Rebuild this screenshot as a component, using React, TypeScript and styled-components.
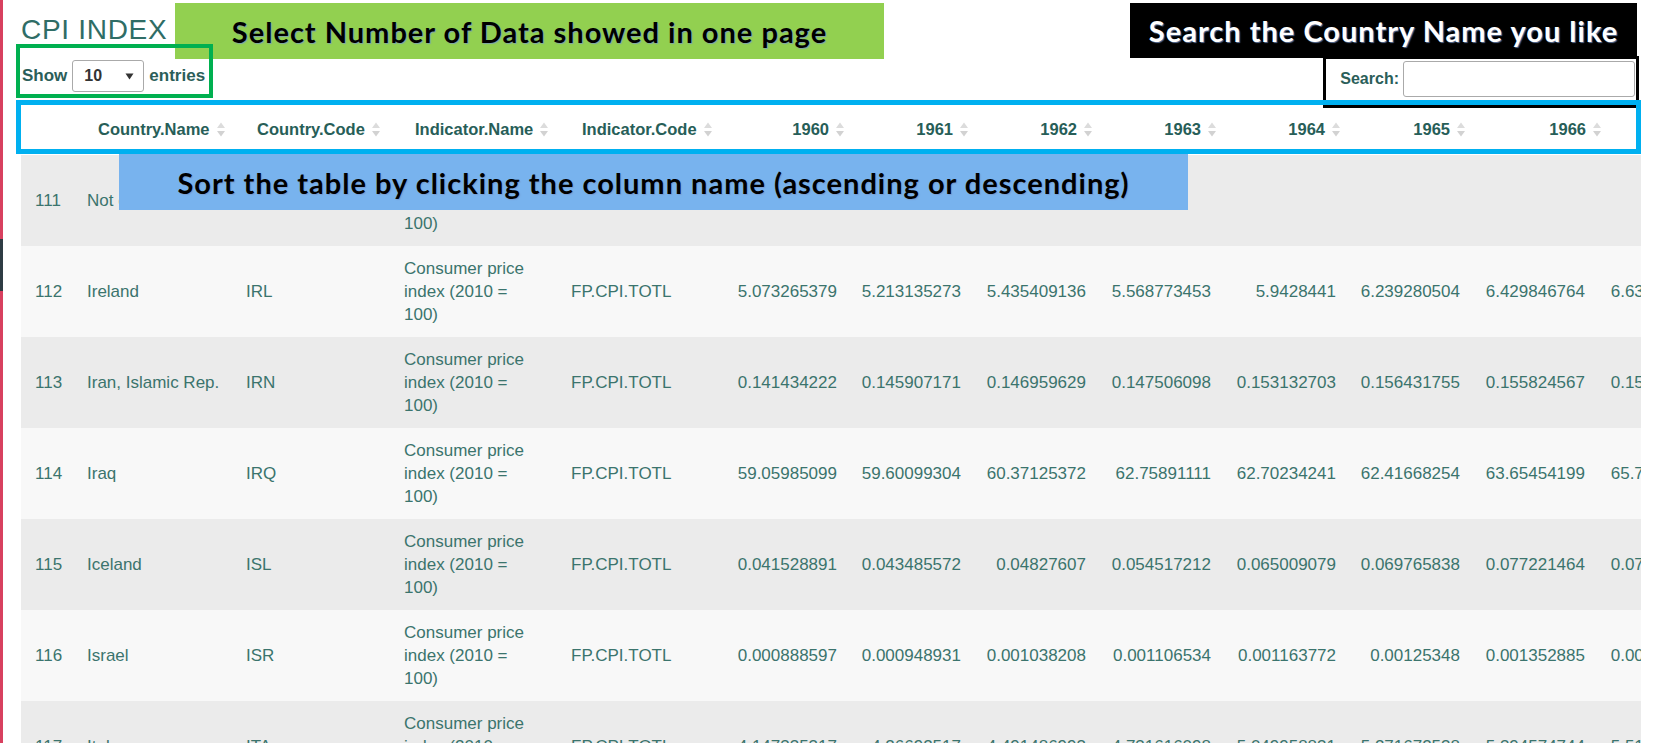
import React from "react";
import styled, { createGlobalStyle } from "styled-components";

const GlobalStyle = createGlobalStyle`
  html, body {
    margin: 0;
    padding: 0;
    background: #ffffff;
  }
  body {
    font-family: "Liberation Sans", Arial, sans-serif;
    overflow: hidden;
  }
`;

const Page = styled.div`
  position: relative;
  display: flex;
  width: 1656px;
  height: 743px;
  overflow: hidden;
  background: #ffffff;
`;

const Rail = styled.div`
  flex: 0 0 3px;
  display: flex;
  flex-direction: column;
  background: #d8405f;
`;

const RailMark = styled.div`
  margin-top: 239px;
  height: 52px;
  background: #2f3c44;
`;

const Main = styled.main`
  flex: 1;
  min-width: 0;
  padding: 0 15px 0 18px;
`;

const Title = styled.h2`
  margin: 0;
  padding-top: 14px;
  font-size: 28px;
  line-height: 32px;
  letter-spacing: 0.7px;
  font-weight: normal;
  color: #2f6d66;
`;

const Controls = styled.div`
  display: flex;
  align-items: center;
  justify-content: space-between;
  height: 58px;
`;

const LengthControl = styled.label`
  display: flex;
  align-items: center;
  gap: 5px;
  margin-top: 2px;
  padding-left: 1px;
  font-size: 17px;
  font-weight: bold;
  color: #2b5e59;
`;

const SelectBox = styled.div`
  display: flex;
  align-items: center;
  justify-content: space-between;
  box-sizing: border-box;
  width: 72px;
  height: 32px;
  padding: 0 9px 0 11px;
  border: 1px solid #aaaaaa;
  border-radius: 3px;
  background: #ffffff;
  font-size: 16px;
  color: #333333;
`;

const SearchControl = styled.label`
  display: flex;
  align-items: center;
  gap: 4px;
  margin-top: 8px;
  margin-right: 6px;
  font-size: 16px;
  font-weight: bold;
  color: #2b5e59;
`;

const SearchInput = styled.div`
  box-sizing: border-box;
  width: 232px;
  height: 36px;
  border: 1px solid #aaaaaa;
  border-radius: 3px;
  background: #ffffff;
`;

const TableWrap = styled.div`
  width: 100%;
  overflow: hidden;
`;

const Table = styled.table<{ $width: number }>`
  table-layout: fixed;
  width: ${(p) => p.$width}px;
  border-collapse: collapse;
  border-spacing: 0;
`;

const HeadCell = styled.th<{ $numeric?: boolean }>`
  height: 51px;
  padding: 0 ${(p) => (p.$numeric ? "6px" : "0")} 0 ${(p) => (p.$numeric ? "0" : "23px")};
  background: #ffffff;
  font-size: 16.5px;
  font-weight: bold;
  color: #275e58;
  vertical-align: middle;
  white-space: nowrap;
`;

const HeadInner = styled.div<{ $numeric?: boolean }>`
  display: flex;
  align-items: center;
  justify-content: ${(p) => (p.$numeric ? "flex-end" : "flex-start")};
  gap: 6px;
`;

const Row = styled.tr<{ $odd: boolean }>`
  background: ${(p) => (p.$odd ? "#ebebeb" : "#f8f8f8")};
`;

const Cell = styled.td<{ $numeric?: boolean }>`
  padding: 11px 12px;
  font-size: 17px;
  line-height: 23px;
  color: #3b746d;
  text-align: ${(p) => (p.$numeric ? "right" : "left")};
  vertical-align: middle;
  white-space: ${(p) => (p.$numeric ? "nowrap" : "normal")};
  overflow: hidden;
`;

const IndexCell = styled(Cell)`
  padding-left: 14px;
`;

const IndicatorCell = styled(Cell)`
  padding-right: 30px;
`;

const Callout = styled.div<{ $x: number; $y: number; $w: number; $h: number; $bg: string; $fg: string }>`
  position: absolute;
  left: ${(p) => p.$x}px;
  top: ${(p) => p.$y}px;
  width: ${(p) => p.$w}px;
  height: ${(p) => p.$h}px;
  display: flex;
  align-items: center;
  justify-content: center;
  background: ${(p) => p.$bg};
  color: ${(p) => p.$fg};
  font-family: Lato, "Open Sans", sans-serif;
  font-weight: 700;
  font-size: 29px;
  letter-spacing: 1px;
  white-space: nowrap;
  text-shadow: 1px 1px 1px rgba(120, 150, 200, 0.75);
`;

const Frame = styled.div<{ $x: number; $y: number; $w: number; $h: number; $color: string; $thick: number }>`
  position: absolute;
  left: ${(p) => p.$x}px;
  top: ${(p) => p.$y}px;
  width: ${(p) => p.$w}px;
  height: ${(p) => p.$h}px;
  box-sizing: border-box;
  border: ${(p) => p.$thick}px solid ${(p) => p.$color};
  pointer-events: none;
`;

const SortIcon = () => (
  <svg width="10" height="17" viewBox="0 0 10 17" aria-hidden="true">
    <path d="M1 7 L9 7 L5 1.5 Z" fill="#dcdcdc" />
    <path d="M1 10 L9 10 L5 15.5 Z" fill="#d2d2d2" />
  </svg>
);

const CaretDown = () => (
  <svg width="9" height="7" viewBox="0 0 9 7" aria-hidden="true">
    <path d="M0.5 0.5 L8.5 0.5 L4.5 6.5 Z" fill="#333333" />
  </svg>
);

// header and body are separate tables, as in a scrolling DataTable
const headWidths = [54, 159, 158, 167, 168, 124, 124, 124, 124, 124, 125, 136];
const bodyWidths = [54, 159, 158, 167, 165, 125, 124, 125, 125, 125, 124, 125, 125];
const sum = (a: number[]) => a.reduce((s, v) => s + v, 0);

const columns = [
  { label: "", numeric: false },
  { label: "Country.Name", numeric: false },
  { label: "Country.Code", numeric: false },
  { label: "Indicator.Name", numeric: false },
  { label: "Indicator.Code", numeric: false },
  { label: "1960", numeric: true },
  { label: "1961", numeric: true },
  { label: "1962", numeric: true },
  { label: "1963", numeric: true },
  { label: "1964", numeric: true },
  { label: "1965", numeric: true },
  { label: "1966", numeric: true },
];

const rows = [
  { id: 111, name: "Not classified", code: "INX", values: ["", "", "", "", "", "", "", ""] },
  {
    id: 112,
    name: "Ireland",
    code: "IRL",
    values: ["5.073265379", "5.213135273", "5.435409136", "5.568773453", "5.9428441", "6.239280504", "6.429846764", "6.634895123"],
  },
  {
    id: 113,
    name: "Iran, Islamic Rep.",
    code: "IRN",
    values: ["0.141434222", "0.145907171", "0.146959629", "0.147506098", "0.153132703", "0.156431755", "0.155824567", "0.158434286"],
  },
  {
    id: 114,
    name: "Iraq",
    code: "IRQ",
    values: ["59.05985099", "59.60099304", "60.37125372", "62.75891111", "62.70234241", "62.41668254", "63.65454199", "65.71453261"],
  },
  {
    id: 115,
    name: "Iceland",
    code: "ISL",
    values: ["0.041528891", "0.043485572", "0.04827607", "0.054517212", "0.065009079", "0.069765838", "0.077221464", "0.078962531"],
  },
  {
    id: 116,
    name: "Israel",
    code: "ISR",
    values: ["0.000888597", "0.000948931", "0.001038208", "0.001106534", "0.001163772", "0.00125348", "0.001352885", "0.001425521"],
  },
  {
    id: 117,
    name: "Italy",
    code: "ITA",
    values: ["4.147335317", "4.26692517", "4.491486993", "4.731616098", "5.049958831", "5.271672538", "5.394574744", "5.512345678"],
  },
];

export default function App() {
  return (
    <>
      <GlobalStyle />
      <Page>
        <Rail>
          <RailMark />
        </Rail>
        <Main>
          <Title>CPI INDEX</Title>
          <Controls>
            <LengthControl>
              Show
              <SelectBox>
                10
                <CaretDown />
              </SelectBox>
              entries
            </LengthControl>
            <SearchControl>
              Search:
              <SearchInput />
            </SearchControl>
          </Controls>
          <TableWrap>
            <Table $width={sum(headWidths)}>
              <colgroup>
                {headWidths.map((w, i) => (
                  <col key={i} style={{ width: w }} />
                ))}
              </colgroup>
              <thead>
                <tr>
                  {columns.map((c, i) => (
                    <HeadCell key={i} $numeric={c.numeric}>
                      {c.label && (
                        <HeadInner $numeric={c.numeric}>
                          {c.label}
                          <SortIcon />
                        </HeadInner>
                      )}
                    </HeadCell>
                  ))}
                </tr>
              </thead>
            </Table>
          </TableWrap>
          <TableWrap>
            <Table $width={sum(bodyWidths)}>
              <colgroup>
                {bodyWidths.map((w, i) => (
                  <col key={i} style={{ width: w }} />
                ))}
              </colgroup>
              <tbody>
                {rows.map((r, i) => (
                  <Row key={r.id} $odd={i % 2 === 0}>
                    <IndexCell>{r.id}</IndexCell>
                    <Cell>{r.name}</Cell>
                    <Cell>{r.code}</Cell>
                    <IndicatorCell>Consumer price index (2010 = 100)</IndicatorCell>
                    <Cell>FP.CPI.TOTL</Cell>
                    {r.values.map((v, j) => (
                      <Cell key={j} $numeric>
                        {v}
                      </Cell>
                    ))}
                  </Row>
                ))}
              </tbody>
            </Table>
          </TableWrap>
        </Main>

        <Callout $x={175} $y={3} $w={709} $h={56} $bg="#92d050" $fg="#000000">
          Select Number of Data showed in one page
        </Callout>
        <Frame $x={16} $y={44} $w={197} $h={54} $color="#00b050" $thick={4} />
        <Callout $x={1130} $y={3} $w={507} $h={55} $bg="#000000" $fg="#ffffff">
          Search the Country Name you like
        </Callout>
        <Frame $x={1323} $y={56} $w={316} $h={52} $color="#000000" $thick={3} />
        <Frame $x={16} $y={100} $w={1625} $h={54} $color="#00b0f0" $thick={5} />
        <Callout $x={119} $y={154} $w={1069} $h={56} $bg="#78b3ee" $fg="#000000">
          Sort the table by clicking the column name (ascending or descending)
        </Callout>
      </Page>
    </>
  );
}
